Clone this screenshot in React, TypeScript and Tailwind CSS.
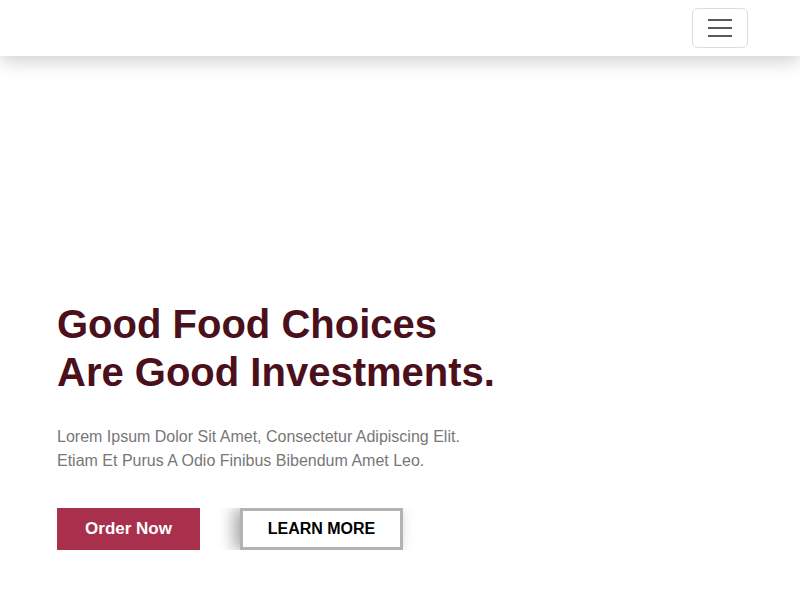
export default function App() {
  return (
    <div className="min-h-[600px] bg-white font-['Liberation_Sans',Arial,sans-serif]">
      <nav className="relative z-10 h-14 bg-white shadow-[0_6px_18px_rgba(0,0,0,0.18)] flex items-center justify-end pr-[52px]">
        <button className="w-14 h-10 rounded-md border border-[#dcdcdc] flex flex-col items-center justify-center gap-[6px]">
          <span className="block w-6 h-[2px] bg-[#5a5a5a]" />
          <span className="block w-6 h-[2px] bg-[#5a5a5a]" />
          <span className="block w-6 h-[2px] bg-[#5a5a5a]" />
        </button>
      </nav>

      <main className="px-[57px] pt-[244px]">
        <h1 className="text-[40px] leading-[48px] font-bold text-[#4a101c]">
          Good Food Choices
          <br />
          Are Good Investments.
        </h1>
        <p className="mt-[29px] text-base leading-6 text-[#777777]">
          Lorem Ipsum Dolor Sit Amet, Consectetur Adipiscing Elit.
          <br />
          Etiam Et Purus A Odio Finibus Bibendum Amet Leo.
        </p>
        <div className="mt-[35px] flex items-stretch gap-10 overflow-hidden w-fit pr-4">
          <button className="w-[143px] h-[42px] bg-[#a8304d] text-white font-bold text-[17px]">
            Order Now
          </button>
          <button className="w-[163px] h-[42px] bg-white border-[3px] border-[#b3b3b3] text-black font-bold text-[16px] shadow-[-6px_0_16px_rgba(0,0,0,0.35)]">
            LEARN MORE
          </button>
        </div>
      </main>
    </div>
  );
}
